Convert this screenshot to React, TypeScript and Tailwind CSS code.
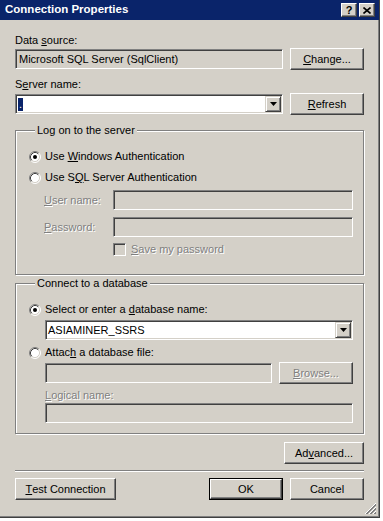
import React from 'react';

type Kids = { children?: React.ReactNode };

// mnemonic underline
function U({ children }: Kids) {
  return <span className="underline underline-offset-[1px]">{children}</span>;
}

function Btn({
  children,
  className = '',
  disabled = false,
  isDefault = false,
}: Kids & { className?: string; disabled?: boolean; isDefault?: boolean }) {
  return (
    <div className={`h-[22px] bg-[#d4d0c8] ${isDefault ? 'border border-black' : ''} ${className}`}>
      <div
        className={`w-full h-full flex items-center justify-center border border-t-white border-l-white border-r-[#404040] border-b-[#404040] shadow-[inset_-1px_-1px_0_#808080] ${
          disabled ? 'text-[#808080] [text-shadow:1px_1px_0_#fff]' : 'text-black'
        }`}
      >
        {children}
      </div>
    </div>
  );
}

function TextBox({
  children,
  className = '',
  disabled = false,
}: Kids & { className?: string; disabled?: boolean }) {
  return (
    <div
      className={`h-[20px] flex items-center pl-[3px] border border-t-[#808080] border-l-[#808080] border-r-white border-b-white shadow-[inset_1px_1px_0_#404040,inset_-1px_-1px_0_#d4d0c8] ${
        disabled ? 'bg-[#d4d0c8]' : 'bg-white'
      } ${className}`}
    >
      {children}
    </div>
  );
}

function Combo({ children, className = '' }: Kids & { className?: string }) {
  return (
    <div
      className={`h-[20px] flex items-center border border-t-[#808080] border-l-[#808080] border-r-white border-b-white shadow-[inset_1px_1px_0_#404040,inset_-1px_-1px_0_#d4d0c8] bg-white p-[1px] ${className}`}
    >
      <div className="flex-1 flex items-center pl-[1px] overflow-hidden">{children}</div>
      <div className="w-[16px] h-[16px] flex items-center justify-center bg-[#d4d0c8] border border-t-[#d4d0c8] border-l-[#d4d0c8] border-r-[#404040] border-b-[#404040] shadow-[inset_1px_1px_0_#fff,inset_-1px_-1px_0_#808080]">
        <svg width="7" height="4" viewBox="0 0 7 4">
          <path d="M0 0h7L3.5 4z" fill="#000" />
        </svg>
      </div>
    </div>
  );
}

function Radio({ checked = false }: { checked?: boolean }) {
  return (
    <svg width="12" height="12" viewBox="0 0 12 12" className="shrink-0">
      <circle cx="6" cy="6" r="5" fill="#fff" />
      <path d="M2.11 9.89A5.5 5.5 0 0 1 9.89 2.11" fill="none" stroke="#808080" strokeWidth="1" />
      <path d="M9.89 2.11A5.5 5.5 0 0 1 2.11 9.89" fill="none" stroke="#fff" strokeWidth="1" />
      <path d="M2.82 9.18A4.5 4.5 0 0 1 9.18 2.82" fill="none" stroke="#404040" strokeWidth="1" />
      <path d="M9.18 2.82A4.5 4.5 0 0 1 2.82 9.18" fill="none" stroke="#d4d0c8" strokeWidth="1" />
      {checked && <circle cx="6" cy="6" r="2" fill="#000" />}
    </svg>
  );
}

function GroupBox({ title, children, className = '' }: Kids & { title: string; className?: string }) {
  return (
    <fieldset
      className={`border border-[#808080] shadow-[inset_1px_1px_0_#fff,1px_1px_0_#fff] ${className}`}
    >
      <legend className="ml-[6px] px-[2px] leading-[13px] bg-[#d4d0c8]">{title}</legend>
      {children}
    </fieldset>
  );
}

const disabledText = 'text-[#808080] [text-shadow:1px_1px_0_#fff]';

export default function App() {
  return (
    <div className="w-[383px] h-[521px] bg-white font-['Liberation_Sans',Arial,sans-serif] text-[11px] text-black">
      <div className="relative w-[380px] h-[518px] flex flex-col bg-[#d4d0c8] border-r border-b border-[#404040] shadow-[inset_-1px_-1px_0_#808080]">
        {/* title bar */}
        <div className="h-[20px] flex items-center justify-between bg-[#0a246a] pl-[5px] pr-[4px]">
          <span className="text-white font-bold text-[11.5px] leading-none">Connection Properties</span>
          <div className="flex gap-[2px]">
            <div className="w-[16px] h-[14px] flex items-center justify-center bg-[#d4d0c8] border border-t-white border-l-white border-r-[#404040] border-b-[#404040] shadow-[inset_-1px_-1px_0_#808080] font-bold text-[11px] leading-none">
              ?
            </div>
            <div className="w-[16px] h-[14px] flex items-center justify-center bg-[#d4d0c8] border border-t-white border-l-white border-r-[#404040] border-b-[#404040] shadow-[inset_-1px_-1px_0_#808080]">
              <svg width="8" height="7" viewBox="0 0 8 7">
                <path d="M0.5 0.5l7 6M7.5 0.5l-7 6" stroke="#000" strokeWidth="1.6" />
              </svg>
            </div>
          </div>
        </div>

        <div className="flex flex-col pl-[15px] pr-[15px]">
          <div className="mt-[14px] h-[13px] leading-[13px]">
            Data <U>s</U>ource:
          </div>
          <div className="mt-[1px] flex items-center gap-[7px] h-[22px]">
            <TextBox disabled className="w-[268px]">
              Microsoft SQL Server (SqlClient)
            </TextBox>
            <Btn className="w-[74px]">
              <U>C</U>hange...
            </Btn>
          </div>

          <div className="mt-[8px] h-[13px] leading-[13px]">
            S<U>e</U>rver name:
          </div>
          <div className="mt-[2px] flex items-center gap-[7px] h-[22px]">
            <Combo className="w-[268px]">
              <span className="bg-[#0a246a] text-white px-[1px] leading-[13px]">.</span>
            </Combo>
            <Btn className="w-[74px]">
              <U>R</U>efresh
            </Btn>
          </div>

          {/* log on */}
          <GroupBox title="Log on to the server" className="mt-[9px] pl-[13px] pr-[10px] pb-[18px]">
            <div className="mt-[13px] flex items-center gap-[4px] h-[13px]">
              <Radio checked />
              <span>
                Use <U>W</U>indows Authentication
              </span>
            </div>
            <div className="mt-[8px] flex items-center gap-[4px] h-[13px]">
              <Radio />
              <span>
                Use S<U>Q</U>L Server Authentication
              </span>
            </div>
            <div className="mt-[6px] flex items-center h-[20px] pl-[15px]">
              <span className={`w-[69px] ${disabledText}`}>
                <U>U</U>ser name:
              </span>
              <TextBox disabled className="flex-1" />
            </div>
            <div className="mt-[7px] flex items-center h-[20px] pl-[15px]">
              <span className={`w-[69px] ${disabledText}`}>
                <U>P</U>assword:
              </span>
              <TextBox disabled className="flex-1" />
            </div>
            <div className="mt-[6px] flex items-center h-[13px] pl-[84px] gap-[5px]">
              <div className="w-[13px] h-[13px] border border-t-[#808080] border-l-[#808080] border-r-white border-b-white shadow-[inset_1px_1px_0_#404040,inset_-1px_-1px_0_#d4d0c8] bg-[#d4d0c8]" />
              <span className={disabledText}>
                <U>S</U>ave my password
              </span>
            </div>
          </GroupBox>

          {/* database */}
          <GroupBox title="Connect to a database" className="mt-[2px] pl-[13px] pr-[10px] pb-[10px]">
            <div className="mt-[13px] flex items-center gap-[4px] h-[13px]">
              <Radio checked />
              <span>
                Select or enter a <U>d</U>atabase name:
              </span>
            </div>
            <div className="mt-[4px] pl-[16px]">
              <Combo className="w-full">ASIAMINER_SSRS</Combo>
            </div>
            <div className="mt-[6px] flex items-center gap-[4px] h-[13px]">
              <Radio />
              <span>
                Attac<U>h</U> a database file:
              </span>
            </div>
            <div className="mt-[3px] pl-[16px] flex items-center gap-[7px] h-[22px]">
              <TextBox disabled className="flex-1" />
              <Btn disabled className="w-[74px]">
                <U>B</U>rowse...
              </Btn>
            </div>
            <div className={`mt-[5px] pl-[16px] h-[13px] leading-[13px] ${disabledText}`}>
              <U>L</U>ogical name:
            </div>
            <div className="mt-[1px] pl-[16px]">
              <TextBox disabled className="w-full" />
            </div>
          </GroupBox>

          <div className="mt-[8px] flex justify-end">
            <Btn className="w-[80px]">
              Ad<U>v</U>anced...
            </Btn>
          </div>

          <div className="mt-[6px] h-[2px] border-t border-t-[#808080] border-b border-b-white" />

          <div className="mt-[6px] flex items-center">
            <Btn className="w-[101px]">
              <U>T</U>est Connection
            </Btn>
            <Btn isDefault className="w-[74px] ml-auto">
              OK
            </Btn>
            <Btn className="w-[74px] ml-[7px]">Cancel</Btn>
          </div>
        </div>

        {/* size grip */}
        <svg width="12" height="12" viewBox="0 0 12 12" className="absolute right-[2px] bottom-[2px]">
          <path d="M11 1L1 11M11 5L5 11M11 9L9 11" stroke="#808080" strokeWidth="1" />
          <path d="M11 2L2 11M11 6L6 11M11 10L10 11" stroke="#808080" strokeWidth="1" />
          <path d="M11 0L0 11M11 4L4 11M11 8L8 11" stroke="#fff" strokeWidth="1" />
        </svg>
      </div>
    </div>
  );
}
